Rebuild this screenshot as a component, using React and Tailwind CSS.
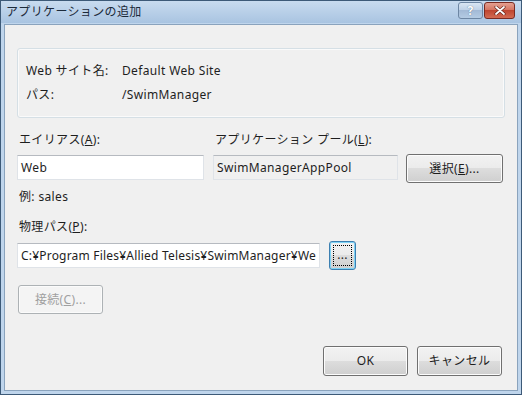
const font = { fontFamily: '"Noto Sans", "Noto Sans CJK JP", sans-serif' };

const Btn = ({ children, className = '', disabled = false, focused = false }) => (
  <div
    className={`flex items-center justify-center rounded-[3px] border ${
      disabled
        ? 'border-[#adb2b5] bg-[#f4f4f4] text-[#a0a0a0] shadow-[inset_0_0_0_1px_#fbfbfb]'
        : focused
        ? 'border-[#3c7fb1] bg-[linear-gradient(to_bottom,#f2f2f2_0%,#ebebeb_50%,#dddddd_50%,#cfcfcf_100%)] shadow-[inset_0_0_0_1px_#7fd3f5] text-[#1e1e1e]'
        : 'border-[#707070] bg-[linear-gradient(to_bottom,#f2f2f2_0%,#ebebeb_50%,#dddddd_50%,#cfcfcf_100%)] shadow-[inset_0_0_0_1px_#fcfcfc] text-[#1e1e1e]'
    } ${className}`}
  >
    {children}
  </div>
);

const Field = ({ value, className = '', readOnly = false }) => (
  <div
    className={`flex items-center overflow-hidden whitespace-nowrap border border-[#dfe3e8] border-t-[#b6bac0] px-[3px] text-[#1e1e1e] ${
      readOnly ? 'bg-[#f0f0f0]' : 'bg-white'
    } ${className}`}
  >
    {value}
  </div>
);

export default function App() {
  return (
    <div
      className="w-[522px] h-[395px] flex flex-col border border-[#3d5a78] bg-[#bfd5ec] text-[12px] leading-none tracking-[0.35px]"
      style={font}
    >
      {/* title bar */}
      <div className="h-[22px] shrink-0 flex items-start justify-between bg-[linear-gradient(to_bottom,#c8dbef,#a9c4e1)]">
        <span className="pl-[5px] pt-[5px] text-[12px] text-[#1c2a3a]">アプリケーションの追加</span>
        <div className="flex pr-[6px] pt-[1px] gap-[1px]">
          <div className="w-[25px] h-[17px] flex items-center justify-center rounded-[3px] border border-[#6d86a3] bg-[linear-gradient(to_bottom,#d9e6f3_0%,#bdd0e6_50%,#a3bad6_50%,#b4cbe3_100%)]">
            <span className="text-[12px] font-bold text-white [text-shadow:0_0_1px_#3d5572]">?</span>
          </div>
          <div className="w-[31px] h-[17px] flex items-center justify-center rounded-[3px] border border-[#7a2b22] bg-[linear-gradient(to_bottom,#e4a091_0%,#d4715d_50%,#bf4630_50%,#d36b52_100%)]">
            <svg width="12" height="9" viewBox="0 0 12 9">
              <path d="M2 1l8 7M10 1L2 8" stroke="#5b1d14" strokeWidth="3" strokeLinecap="round" />
              <path d="M2 1l8 7M10 1L2 8" stroke="#fff" strokeWidth="1.8" strokeLinecap="round" />
            </svg>
          </div>
        </div>
      </div>

      {/* client area */}
      <div className="flex-1 mx-[3px] mt-[1px] mb-[3px] flex flex-col border border-[#8aa3bd] bg-[#f0f0f0] px-[12px] pt-[23px]">
        {/* info group */}
        <div className="h-[70px] flex flex-col justify-center gap-[12px] rounded-[3px] border border-[#d5dfe5] shadow-[inset_0_0_0_1px_#fafafa] pl-[8px] text-[#1e1e1e]">
          <div className="flex">
            <span className="w-[96px]">Web サイト名:</span>
            <span>Default Web Site</span>
          </div>
          <div className="flex">
            <span className="w-[96px]">パス:</span>
            <span>/SwimManager</span>
          </div>
        </div>

        {/* alias / pool */}
        <div className="flex mt-[16px] text-[#1e1e1e]">
          <span className="w-[198px] pl-[2px]">
            エイリアス(<u>A</u>):
          </span>
          <span>
            アプリケーション プール(<u>L</u>):
          </span>
        </div>
        <div className="flex items-start mt-[8px]">
          <Field value="Web" className="w-[187px] h-[25px] mt-[1px]" />
          <Field value="SwimManagerAppPool" readOnly className="w-[185px] h-[25px] ml-[9px] mt-[1px]" />
          <Btn className="w-[97px] h-[29px] ml-[8px]">
            選択(<u>E</u>)...
          </Btn>
        </div>

        <span className="mt-[8px] pl-[2px] text-[#1e1e1e]">例: sales</span>

        <span className="mt-[18px] pl-[2px] text-[#1e1e1e]">
          物理パス(<u>P</u>):
        </span>
        <div className="flex items-start mt-[8px]">
          <Field
            value="C:¥Program Files¥Allied Telesis¥SwimManager¥We"
            className="w-[303px] h-[25px] mt-[2px] tracking-[0.2px]"
          />
          <Btn focused className="w-[27px] h-[29px] ml-[9px] relative">
            <span className="absolute inset-[3px] border border-dotted border-black" />
            <span className="pb-[2px]">...</span>
          </Btn>
        </div>

        <Btn disabled className="w-[85px] h-[29px] mt-[15px] ml-[1px]">
          接続(<u>C</u>)...
        </Btn>

        <div className="flex justify-end gap-[9px] mt-[32px] pr-[3px]">
          <Btn className="w-[85px] h-[30px]">OK</Btn>
          <Btn className="w-[85px] h-[30px]">キャンセル</Btn>
        </div>
      </div>
    </div>
  );
}
